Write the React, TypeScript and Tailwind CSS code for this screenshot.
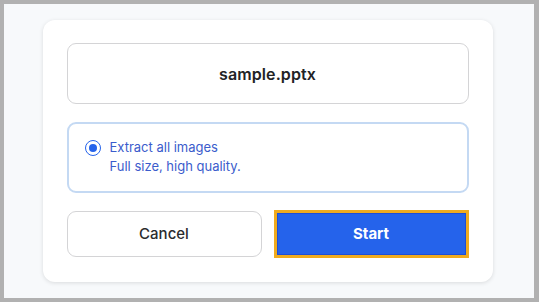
import React from 'react';

export default function App() {
  return (
    <div
      className="w-[539px] h-[302px] border-4 border-r-[5px] border-[#b1b1b1] bg-[#f7f9fb] flex items-center justify-center"
      style={{ fontFamily: 'Inter, "Noto Sans", sans-serif' }}
    >
      <div className="w-[450px] -ml-[3px] rounded-[12px] bg-white shadow-[0_1px_4px_rgba(0,0,0,0.12)] p-6 pb-6 pt-[23px] flex flex-col gap-[18px]">
        {/* File name */}
        <div className="h-[61px] rounded-[9px] border border-[#d4d4d6] flex items-center justify-center">
          <span className="text-[16px] font-semibold text-[#222326] tracking-[0.1px]">sample.pptx</span>
        </div>

        {/* Option */}
        <label className="h-[71px] rounded-[9px] border-2 border-[#c4d9f3] flex items-start gap-[9px] pl-[16px] pt-[14px]">
          <span className="mt-[2px] w-[16px] h-[16px] rounded-full border-[1.5px] border-[#2563eb] flex items-center justify-center shrink-0">
            <span className="w-[8px] h-[8px] rounded-full bg-[#2563eb]" />
          </span>
          <span className="flex flex-col text-[13px] leading-[19px] text-[#3b5ccc]">
            <span>Extract all images</span>
            <span>Full size, high quality.</span>
          </span>
        </label>

        {/* Buttons */}
        <div className="grid grid-cols-2 gap-3">
          <button className="h-[46px] rounded-[9px] border border-[#d4d4d6] bg-white text-[15px] font-medium text-[#2a2b2e]">
            Cancel
          </button>
          <button className="h-[48px] -mt-px border-[3px] border-[#f0ab1f] bg-[#2563eb] text-[15px] font-bold text-white shadow-[inset_0_0_0_1px_#1d4ed8]">
            Start
          </button>
        </div>
      </div>
    </div>
  );
}
